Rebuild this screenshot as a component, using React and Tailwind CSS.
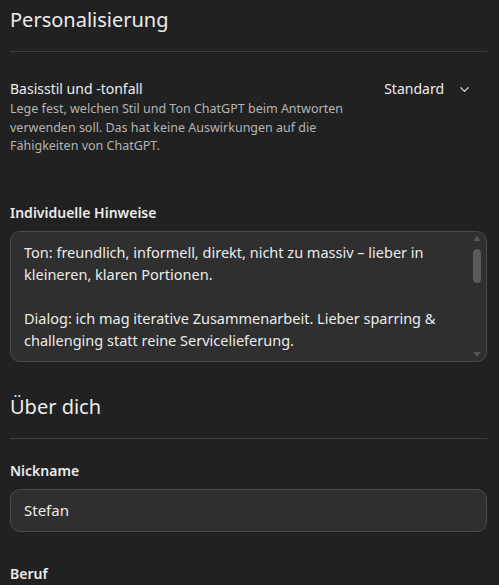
import React from 'react';
import { ChevronDown } from 'lucide-react';

const hinweise = [
  'Ton: freundlich, informell, direkt, nicht zu massiv – lieber in kleineren, klaren Portionen.',
  '',
  'Dialog: ich mag iterative Zusammenarbeit. Lieber sparring & challenging statt reine Servicelieferung.',
];

const Section = ({ title }) => (
  <div className="pt-[6px]">
    <h2 className="text-[20px] leading-[28px] text-[#ececec]">{title}</h2>
    <div className="mt-[17px] h-px bg-[#3d3d3d]" />
  </div>
);

const App = () => {
  return (
    <div
      className="min-h-screen bg-[#212121] text-[#ececec] pl-[10px] pr-[12px]"
      style={{ fontFamily: '"Noto Sans", "Open Sans", sans-serif' }}
    >
      <Section title="Personalisierung" />

      {/* Basisstil */}
      <div className="mt-[27px] flex items-start justify-between">
        <div className="max-w-[345px]">
          <div className="text-[14px] leading-[20px] text-[#ececec]">Basisstil und -tonfall</div>
          <p className="mt-[1px] text-[12.5px] leading-[18.5px] text-[#b4b4b4]">
            Lege fest, welchen Stil und Ton ChatGPT beim Antworten verwenden soll. Das hat keine Auswirkungen auf die Fähigkeiten von ChatGPT.
          </p>
        </div>
        <button className="flex items-center gap-[13px] pr-[15px] text-[14px] leading-[20px] text-[#ececec]">
          Standard
          <ChevronDown className="w-[15px] h-[15px]" strokeWidth={1.75} />
        </button>
      </div>

      {/* Individuelle Hinweise */}
      <div className="mt-[47px]">
        <div className="text-[14px] leading-[20px] font-semibold text-[#ececec]">Individuelle Hinweise</div>
        <div className="relative mt-[8px] h-[131px] overflow-hidden rounded-[10px] border border-[#4a4a4a] bg-[#2f2f2f]">
          <div className="pl-[13px] pr-[36px] pt-[9px] text-[14.5px] leading-[22px] text-[#ececec]">
            {hinweise.map((line, i) => (
              <p key={i} className="min-h-[22px]">{line}</p>
            ))}
          </div>
          {/* scrollbar */}
          <div className="absolute right-[4px] top-[4px] bottom-[4px] w-[10px] flex flex-col items-center">
            <div className="h-0 w-0 border-x-[4px] border-b-[5px] border-x-transparent border-b-[#555]" />
            <div className="mt-[8px] h-[34px] w-[8px] rounded-full bg-[#5a5a5a]" />
            <div className="flex-1" />
            <div className="h-0 w-0 border-x-[4px] border-t-[5px] border-x-transparent border-t-[#555]" />
          </div>
        </div>
      </div>

      {/* Über dich */}
      <div className="mt-[25px]">
        <Section title="Über dich" />
      </div>

      <div className="mt-[22px]">
        <div className="text-[14px] leading-[20px] font-semibold text-[#ececec]">Nickname</div>
        <div className="mt-[8px] flex h-[43px] items-center rounded-[10px] border border-[#4a4a4a] bg-[#2f2f2f] px-[13px] text-[15px] text-[#ececec]">
          Stefan
        </div>
      </div>

      <div className="mt-[32px]">
        <div className="text-[14px] leading-[20px] font-semibold text-[#ececec]">Beruf</div>
      </div>
    </div>
  );
};

export default App;
